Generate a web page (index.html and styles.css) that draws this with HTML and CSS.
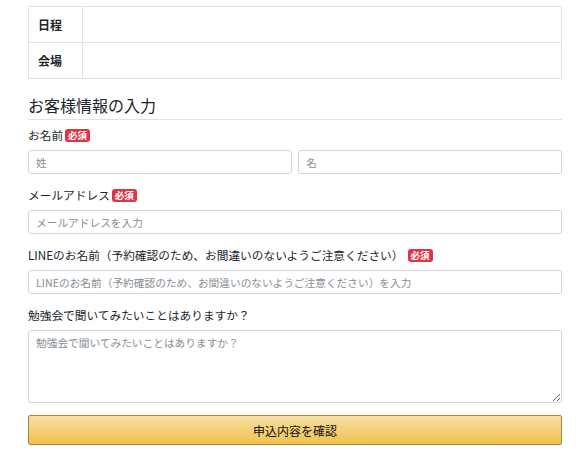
FILE: index.html
```html
<!DOCTYPE html>
<html lang="ja">
<head>
<meta charset="utf-8">
<link rel="stylesheet" href="styles.css">
</head>
<body>
<div class="wrap">
  <table class="info">
    <tr><th>日程</th><td></td></tr>
    <tr><th>会場</th><td></td></tr>
  </table>
  <h2 class="title">お客様情報の入力</h2>
  <form class="form">
    <div class="group">
      <label class="label">お名前<span class="req">必須</span></label>
      <div class="row">
        <input class="input" type="text" placeholder="姓">
        <input class="input" type="text" placeholder="名">
      </div>
    </div>
    <div class="group">
      <label class="label">メールアドレス<span class="req">必須</span></label>
      <input class="input" type="text" placeholder="メールアドレスを入力">
    </div>
    <div class="group">
      <label class="label">LINEのお名前（予約確認のため、お間違いのないようご注意ください）<span class="req req-far">必須</span></label>
      <input class="input" type="text" placeholder="LINEのお名前（予約確認のため、お間違いのないようご注意ください）を入力">
    </div>
    <div class="group">
      <label class="label">勉強会で聞いてみたいことはありますか？</label>
      <textarea class="textarea" placeholder="勉強会で聞いてみたいことはありますか？"></textarea>
    </div>
    <button class="btn" type="button">申込内容を確認</button>
  </form>
</div>
</body>
</html>
```

FILE: styles.css
```css
* { box-sizing: border-box; }
html, body { margin: 0; padding: 0; background: #fff; }
body {
  font-family: "Noto Sans CJK JP", "Noto Sans", sans-serif;
  color: #212529;
  font-size: 12px;
}
.wrap {
  width: 534px;
  margin-left: 28px;
  padding-top: 6px;
}
.info {
  width: 100%;
  border-collapse: collapse;
  border: 1px solid #dee2e6;
}
.info th, .info td {
  border: 1px solid #dee2e6;
  height: 36px;
  padding: 0 9px;
}
.info th {
  width: 54px;
  text-align: left;
  font-weight: bold;
  font-size: 12px;
  color: #212529;
}
.title {
  margin: 15px 0 0;
  font-size: 16px;
  font-weight: 400;
  line-height: 22px;
  padding-bottom: 3px;
  border-bottom: 1px solid #dee2e6;
  color: #212529;
}
.form {
  margin-top: 6px;
  display: flex;
  flex-direction: column;
}
.group {
  display: flex;
  flex-direction: column;
  margin-bottom: 12px;
}
.label {
  display: flex;
  align-items: center;
  line-height: 18px;
  height: 18px;
  margin-bottom: 6px;
  font-size: 11.7px;
}
.req {
  display: inline-block;
  background: #dc3545;
  color: #fff;
  font-size: 9.5px;
  font-weight: bold;
  line-height: 13px;
  padding: 0 3px;
  border-radius: 3px;
  margin-left: 2px;
}
.req-far { margin-left: 4px; }
.row {
  display: flex;
  gap: 6px;
}
.row .input { flex: 1; min-width: 0; }
.input, .textarea {
  width: 100%;
  height: 24px;
  border: 1px solid #ced4da;
  border-radius: 3px;
  padding: 0 7px;
  font-family: "Noto Sans CJK JP", "Noto Sans", sans-serif;
  font-size: 10.7px;
  color: #495057;
  background: #fff;
}
.textarea {
  height: 73px;
  padding: 4px 7px;
  resize: vertical;
  display: block;
}
.input::placeholder, .textarea::placeholder { color: #868e96; }
.btn {
  width: 100%;
  height: 30px;
  border: 1px solid #a88734;
  border-radius: 2px;
  background: linear-gradient(to bottom, #f7dfa5, #f0c14b);
  font-family: "Noto Sans CJK JP", "Noto Sans", sans-serif;
  font-size: 12px;
  color: #111;
}
```
